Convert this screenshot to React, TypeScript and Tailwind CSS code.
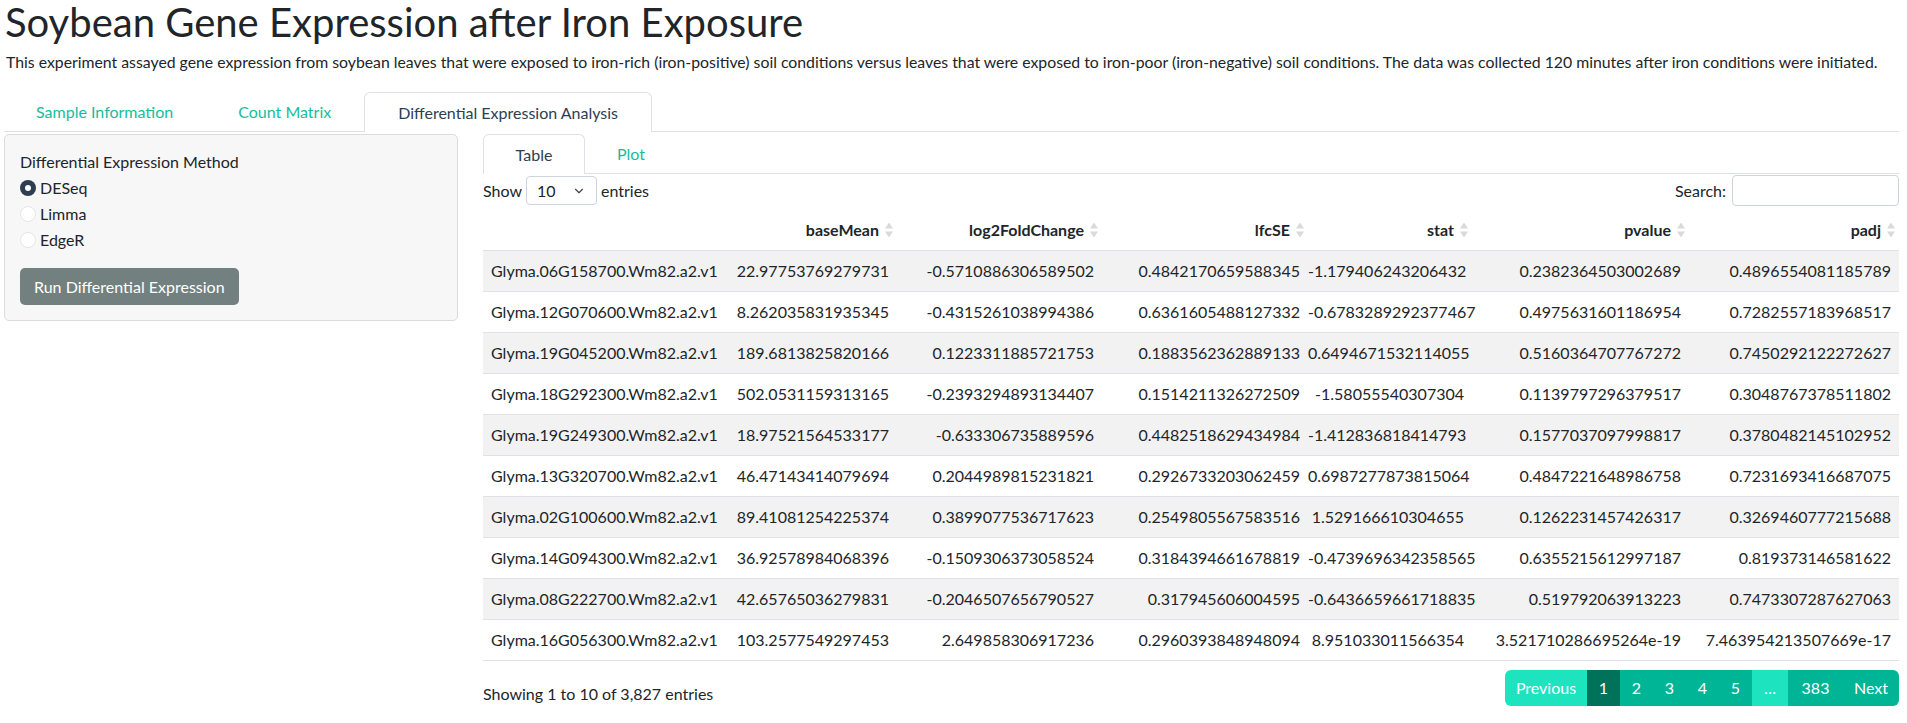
import { ChevronDown } from "lucide-react";

const rows = [
  ["Glyma.06G158700.Wm82.a2.v1", "22.97753769279731", "-0.5710886306589502", "0.4842170659588345", "-1.179406243206432", "0.2382364503002689", "0.4896554081185789"],
  ["Glyma.12G070600.Wm82.a2.v1", "8.262035831935345", "-0.4315261038994386", "0.6361605488127332", "-0.6783289292377467", "0.4975631601186954", "0.7282557183968517"],
  ["Glyma.19G045200.Wm82.a2.v1", "189.6813825820166", "0.1223311885721753", "0.1883562362889133", "0.6494671532114055", "0.5160364707767272", "0.7450292122272627"],
  ["Glyma.18G292300.Wm82.a2.v1", "502.0531159313165", "-0.2393294893134407", "0.1514211326272509", "-1.58055540307304", "0.1139797296379517", "0.3048767378511802"],
  ["Glyma.19G249300.Wm82.a2.v1", "18.97521564533177", "-0.633306735889596", "0.4482518629434984", "-1.412836818414793", "0.1577037097998817", "0.3780482145102952"],
  ["Glyma.13G320700.Wm82.a2.v1", "46.47143414079694", "0.2044989815231821", "0.2926733203062459", "0.6987277873815064", "0.4847221648986758", "0.7231693416687075"],
  ["Glyma.02G100600.Wm82.a2.v1", "89.41081254225374", "0.3899077536717623", "0.2549805567583516", "1.529166610304655", "0.1262231457426317", "0.3269460777215688"],
  ["Glyma.14G094300.Wm82.a2.v1", "36.92578984068396", "-0.1509306373058524", "0.3184394661678819", "-0.4739696342358565", "0.6355215612997187", "0.819373146581622"],
  ["Glyma.08G222700.Wm82.a2.v1", "42.65765036279831", "-0.2046507656790527", "0.317945606004595", "-0.6436659661718835", "0.519792063913223", "0.7473307287627063"],
  ["Glyma.16G056300.Wm82.a2.v1", "103.2577549297453", "2.649858306917236", "0.2960393848948094", "8.951033011566354", "3.521710286695264e-19", "7.463954213507669e-17"],
];

const columns = ["baseMean", "log2FoldChange", "lfcSE", "stat", "pvalue", "padj"];
const widths = ["w-[242px]", "w-[172px]", "w-[205px]", "w-[206px]", "w-[164px]", "w-[217px]", "w-[210px]"];

function SortIcon() {
  return (
    <svg width="8" height="15" viewBox="0 0 8 15" className="absolute right-[4px] top-1/2 -translate-y-1/2">
      <path d="M4 0 L8 6 L0 6 Z" fill="#dadada" />
      <path d="M4 15 L8 9 L0 9 Z" fill="#dadada" />
    </svg>
  );
}

function Radio({ label, checked }: { label: string; checked?: boolean }) {
  return (
    <div className="flex items-center gap-[4px] h-[26px]">
      {checked ? (
        <span className="w-[16px] h-[16px] rounded-full bg-[#2c3e50] flex items-center justify-center">
          <span className="w-[6px] h-[6px] rounded-full bg-white" />
        </span>
      ) : (
        <span className="w-[16px] h-[16px] rounded-full bg-white border border-[#e2e6ea]" />
      )}
      <span>{label}</span>
    </div>
  );
}

export default function App() {
  const pages = ["1", "2", "3", "4", "5"];
  return (
    <div className="min-h-screen bg-white text-[#212529] text-[16px] leading-[24px] pl-[4px] pr-[8px]" style={{ fontFamily: "Lato, 'Open Sans', sans-serif" }}>
      <h2 className="text-[40px] leading-[44px] font-normal pl-[1px]">Soybean Gene Expression after Iron Exposure</h2>
      <p className="mt-[6px] pl-[2px] text-[15.8px] whitespace-nowrap">
        This experiment assayed gene expression from soybean leaves that were exposed to iron-rich (iron-positive) soil conditions versus leaves that were exposed to iron-poor (iron-negative) soil conditions. The data was collected 120 minutes after iron conditions were initiated.
      </p>

      <div className="mt-[18px] flex border-b border-[#dee2e6] h-[40px]">
        <div className="px-[32px] flex items-center text-[#18bc9c]">Sample Information</div>
        <div className="px-[33px] flex items-center text-[#18bc9c]">Count Matrix</div>
        <div className="px-[33px] flex items-center text-[#2c3e50] border border-b-0 border-[#dee2e6] rounded-t-[6px] bg-white -mb-px h-[40px]">
          Differential Expression Analysis
        </div>
      </div>

      <div className="flex gap-[25px] mt-[2px]">
        <div className="w-[454px] shrink-0 self-start bg-[#f7f7f7] border border-[#dcdcdc] rounded-[5px] px-[15px] pt-[15px] pb-[15px]">
          <div className="mb-[1px]">Differential Expression Method</div>
          <Radio label="DESeq" checked />
          <Radio label="Limma" />
          <Radio label="EdgeR" />
          <button className="mt-[15px] bg-[#72817f] text-white rounded-[5px] px-[14px] h-[37px]">
            Run Differential Expression
          </button>
        </div>

        <div className="flex-1 min-w-0">
          <div className="flex border-b border-[#dee2e6] h-[40px]">
            <div className="w-[102px] flex items-center justify-center text-[#2c3e50] border border-b-0 border-[#dee2e6] rounded-t-[6px] bg-white -mb-px h-[40px]">
              Table
            </div>
            <div className="px-[32px] flex items-center text-[#18bc9c]">Plot</div>
          </div>

          <div className="flex items-center justify-between h-[33px]">
            <div className="flex items-center gap-[4px]">
              <span>Show</span>
              <div className="w-[71px] h-[29px] border border-[#ced4da] rounded-[4px] flex items-center justify-between pl-[10px] pr-[10px]">
                <span>10</span>
                <ChevronDown size={14} strokeWidth={2} className="text-[#444]" />
              </div>
              <span>entries</span>
            </div>
            <div className="flex items-center gap-[6px]">
              <span>Search:</span>
              <div className="w-[167px] h-[31px] border border-[#ced4da] rounded-[4px] bg-white" />
            </div>
          </div>

          <table className="w-full table-fixed border-collapse mt-[3px]">
            <thead>
              <tr className="border-b border-[#dee2e6]">
                <th className={`${widths[0]} py-[10px] leading-[20px]`} />
                {columns.map((c, i) => (
                  <th key={c} className={`${widths[i + 1]} relative text-right font-bold py-[10px] leading-[20px] pr-[18px]`}>
                    {c}
                    <SortIcon />
                  </th>
                ))}
              </tr>
            </thead>
            <tbody>
              {rows.map((r, ri) => (
                <tr key={r[0]} className={`border-b border-[#dee2e6] ${ri % 2 === 0 ? "bg-[#f2f2f2]" : "bg-white"}`}>
                  {r.map((v, ci) => (
                    <td key={ci} className={`py-[10px] leading-[20px] whitespace-nowrap ${ci === 0 ? "text-left pl-[8px]" : "text-right pr-[8px]"}`}>
                      {v}
                    </td>
                  ))}
                </tr>
              ))}
            </tbody>
          </table>

          <div className="flex justify-between items-start mt-[9px]">
            <div className="pt-[12px]">Showing 1 to 10 of 3,827 entries</div>
            <div className="flex h-[36px] text-white text-[16px] rounded-[6px] overflow-hidden">
              <div className="w-[82px] flex items-center justify-center bg-[#1ee3bf]">Previous</div>
              {pages.map((p) => (
                <div key={p} className={`w-[33px] flex items-center justify-center ${p === "1" ? "bg-[#007259]" : "bg-[#00b596]"}`}>
                  {p}
                </div>
              ))}
              <div className="w-[36px] flex items-center justify-center bg-[#1ee3bf]">…</div>
              <div className="w-[55px] flex items-center justify-center bg-[#00b596]">383</div>
              <div className="w-[56px] flex items-center justify-center bg-[#00b596]">Next</div>
            </div>
          </div>
        </div>
      </div>
    </div>
  );
}
